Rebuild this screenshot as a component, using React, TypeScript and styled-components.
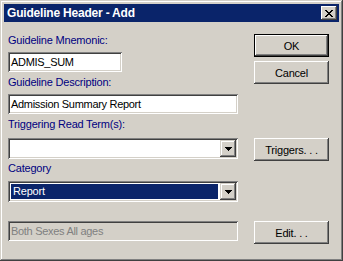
import styled, { createGlobalStyle } from 'styled-components';

const GlobalStyle = createGlobalStyle`
body {
  margin: 0;
  background: #d4d0c8;
  font-family: 'Liberation Sans', Arial, sans-serif;
}
`

const WindowFrame = styled.div`
width: 343px;
height: 261px;
box-sizing: border-box;
padding: 4px;
background: #d4d0c8;
box-shadow: inset -1px -1px #404040, inset 1px 1px #d4d0c8,
  inset -2px -2px #808080, inset 2px 2px #ffffff;
display: flex;
flex-direction: column;
`

const TitleBar = styled.div`
height: 18px;
background: #0a246a;
display: flex;
align-items: center;
justify-content: space-between;
padding: 0 2px 0 3px;
`

const TitleText = styled.span`
color: #ffffff;
font-family: 'Liberation Sans', Arial, sans-serif;
font-weight: 700;
font-size: 12px;
letter-spacing: -0.2px;
`

const CloseButton = styled.button`
width: 16px;
height: 14px;
padding: 0;
border: none;
background: #d4d0c8;
box-shadow: inset -1px -1px #404040, inset 1px 1px #ffffff,
  inset -2px -2px #808080, inset 2px 2px #d4d0c8;
display: flex;
align-items: center;
justify-content: center;
`

const Content = styled.div`
display: flex;
gap: 16px;
padding: 12px 0 0 4px;
`

const FieldColumn = styled.div`
width: 230px;
display: flex;
flex-direction: column;
`

const ButtonColumn = styled.div`
width: 75px;
display: flex;
flex-direction: column;
`

const Label = styled.div<{ $top?: number }>`
margin-top: ${p => p.$top ?? 0}px;
height: 13px;
line-height: 13px;
font-size: 11px;
letter-spacing: -0.2px;
color: #000080;
white-space: nowrap;
`

const TextBox = styled.div<{ $top: number; $width?: number; $disabled?: boolean }>`
margin-top: ${p => p.$top}px;
width: ${p => p.$width ?? 230}px;
height: 20px;
box-sizing: border-box;
padding: 0 3px;
background: ${p => (p.$disabled ? '#d4d0c8' : '#ffffff')};
color: ${p => (p.$disabled ? '#808080' : '#000000')};
box-shadow: inset 1px 1px #808080, inset -1px -1px #ffffff,
  inset 2px 2px #404040, inset -2px -2px #d4d0c8;
font-size: 11px;
letter-spacing: -0.3px;
line-height: 20px;
white-space: nowrap;
`

const Combo = styled.div<{ $top: number }>`
margin-top: ${p => p.$top}px;
width: 230px;
height: 21px;
box-sizing: border-box;
padding: 2px;
background: #ffffff;
box-shadow: inset 1px 1px #808080, inset -1px -1px #ffffff,
  inset 2px 2px #404040, inset -2px -2px #d4d0c8;
display: flex;
`

const ComboValue = styled.div<{ $selected?: boolean }>`
flex: 1;
margin: 1px 2px 1px 1px;
padding-left: 2px;
background: ${p => (p.$selected ? '#0a246a' : 'transparent')};
color: ${p => (p.$selected ? '#ffffff' : '#000000')};
font-size: 11px;
letter-spacing: -0.2px;
line-height: 15px;
`

const ComboArrow = styled.div`
width: 16px;
background: #d4d0c8;
box-shadow: inset -1px -1px #404040, inset 1px 1px #d4d0c8,
  inset -2px -2px #808080, inset 2px 2px #ffffff;
display: flex;
align-items: center;
justify-content: center;
`

const PushButton = styled.button<{ $top: number; $default?: boolean }>`
margin-top: ${p => p.$top}px;
width: 75px;
height: 23px;
box-sizing: border-box;
padding: 0;
background: #d4d0c8;
color: #000000;
font-family: 'Liberation Sans', Arial, sans-serif;
font-size: 11px;
letter-spacing: -0.2px;
border: ${p => (p.$default ? '1px solid #000000' : 'none')};
box-shadow: ${p =>
  p.$default
    ? 'inset -1px -1px #404040, inset 1px 1px #ffffff, inset -2px -2px #808080'
    : 'inset -1px -1px #404040, inset 1px 1px #ffffff, inset -2px -2px #808080, inset 2px 2px #d4d0c8'};
`

const CloseGlyph = () => (
  <svg width="8" height="7" viewBox="0 0 8 7" shapeRendering="crispEdges">
    <path
      fill="#000"
      d="M0 0h2v1H0zM6 0h2v1H6zM1 1h2v1H1zM5 1h2v1H5zM2 2h4v1H2zM3 3h2v1H3zM2 4h4v1H2zM1 5h2v1H1zM5 5h2v1H5zM0 6h2v1H0zM6 6h2v1H6z"
    />
  </svg>
)

const DownArrow = () => (
  <svg width="7" height="4" viewBox="0 0 7 4" shapeRendering="crispEdges">
    <path fill="#000" d="M0 0h7v1H0zM1 1h5v1H1zM2 2h3v1H2zM3 3h1v1H3z" />
  </svg>
)

const App = () => {
  return (
    <>
      <GlobalStyle />
      <WindowFrame>
        <TitleBar>
          <TitleText>Guideline Header - Add</TitleText>
          <CloseButton aria-label="Close">
            <CloseGlyph />
          </CloseButton>
        </TitleBar>
        <Content>
          <FieldColumn>
            <Label>Guideline Mnemonic:</Label>
            <TextBox $top={5} $width={114}>ADMIS_SUM</TextBox>
            <Label $top={4}>Guideline Description:</Label>
            <TextBox $top={5}>Admission Summary Report</TextBox>
            <Label $top={4}>Triggering Read Term(s):</Label>
            <Combo $top={7}>
              <ComboValue />
              <ComboArrow>
                <DownArrow />
              </ComboArrow>
            </Combo>
            <Label $top={3}>Category</Label>
            <Combo $top={6}>
              <ComboValue $selected>Report</ComboValue>
              <ComboArrow>
                <DownArrow />
              </ComboArrow>
            </Combo>
            <TextBox $top={19} $disabled>Both Sexes All ages</TextBox>
          </FieldColumn>
          <ButtonColumn>
            <PushButton $top={0} $default>OK</PushButton>
            <PushButton $top={4}>Cancel</PushButton>
            <PushButton $top={54}>Triggers. . .</PushButton>
            <PushButton $top={60}>Edit. . .</PushButton>
          </ButtonColumn>
        </Content>
      </WindowFrame>
    </>
  )
}

export default App
